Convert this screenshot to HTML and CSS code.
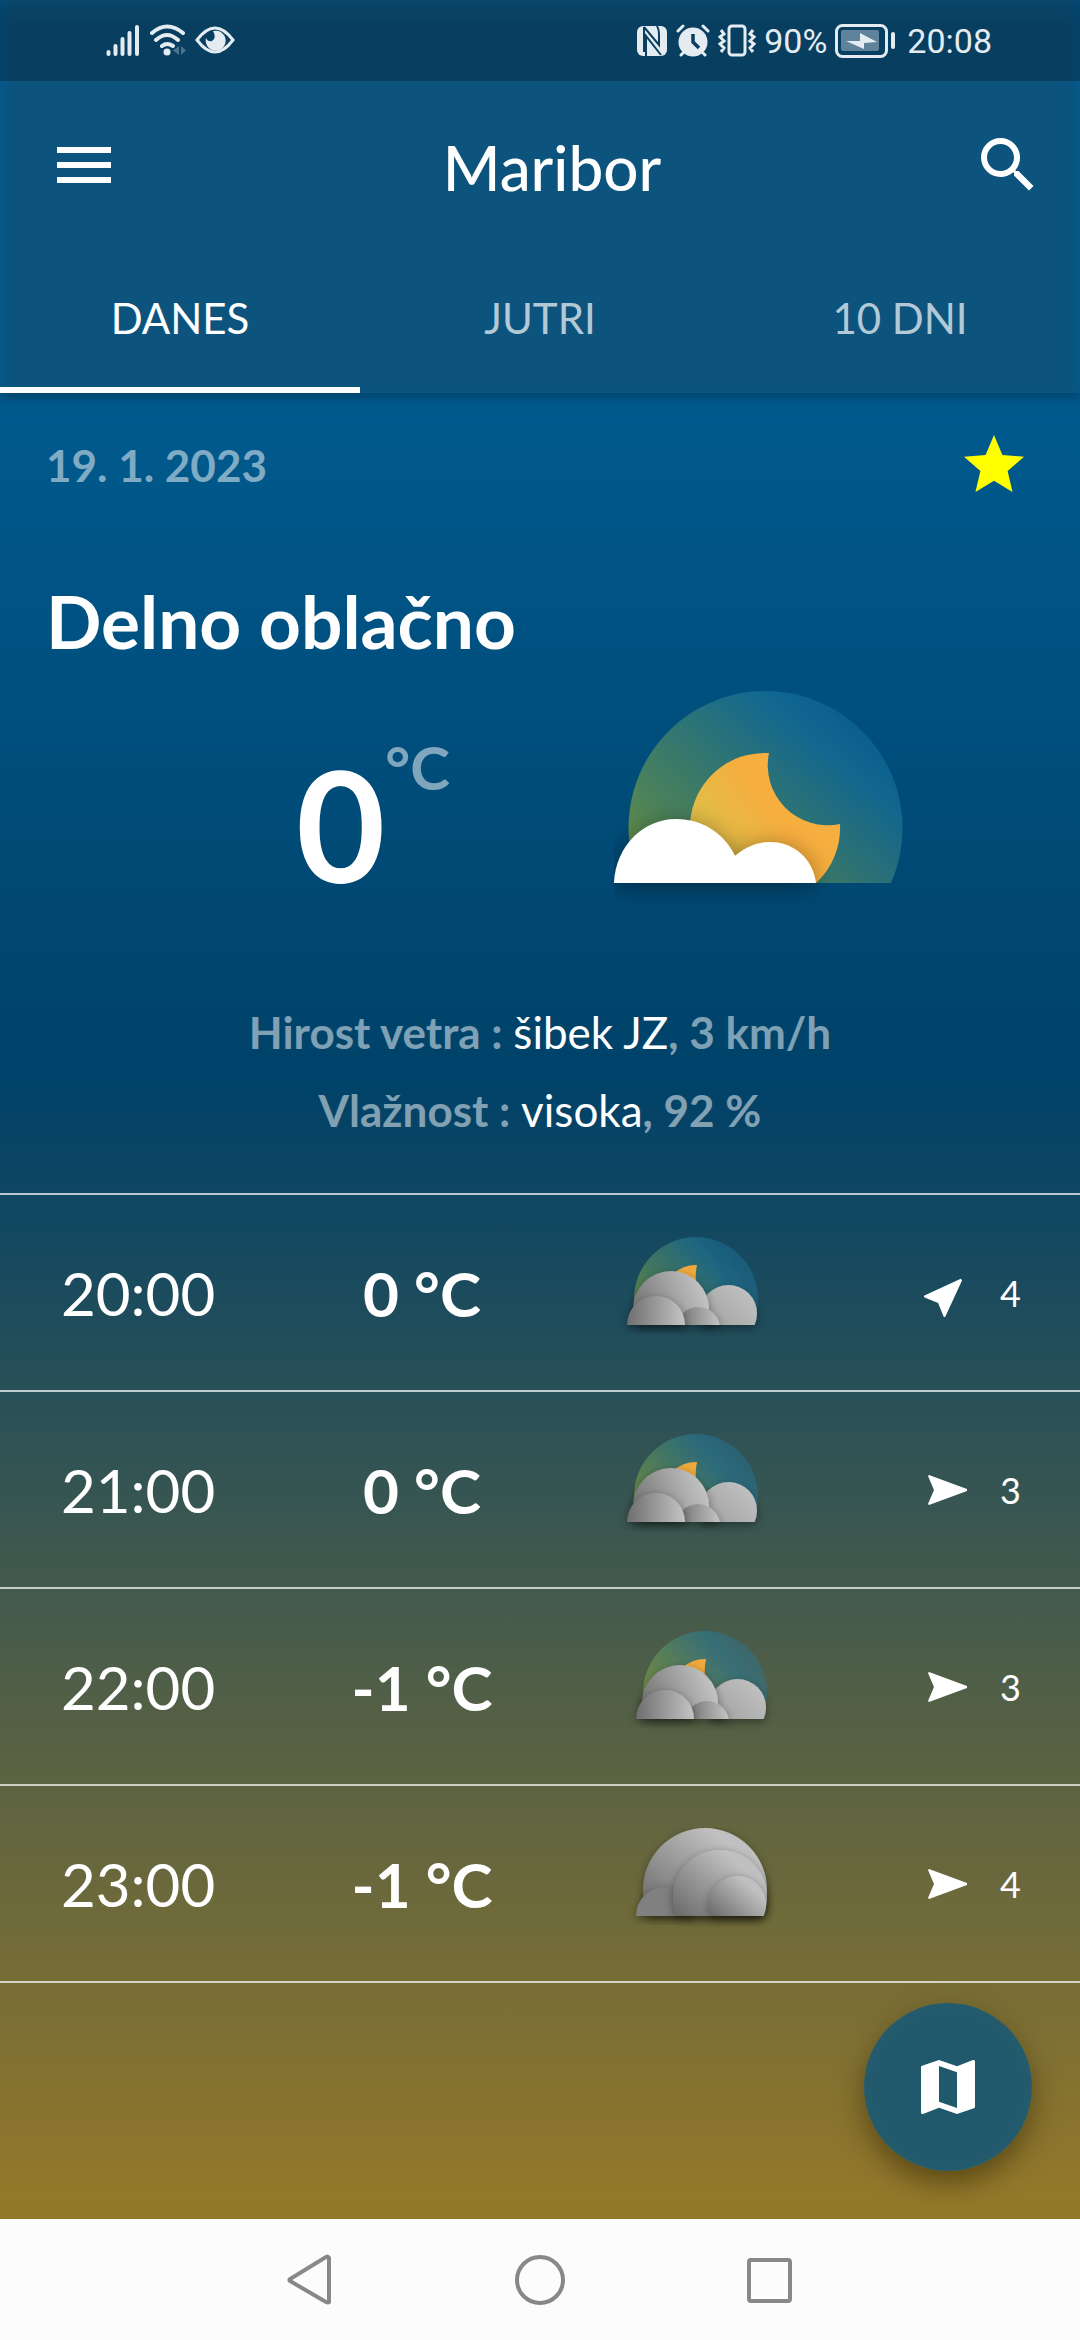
FILE: index.html
```html
<!DOCTYPE html>
<html lang="sl">
<head>
<meta charset="utf-8">
<meta name="viewport" content="width=device-width, initial-scale=1">
<title>Maribor</title>
<link rel="stylesheet" href="styles.css">
</head>
<body>
<svg class="defs" aria-hidden="true">
  <defs>
    <linearGradient id="sky" x1="0" y1=".8" x2=".8" y2=".15">
      <stop offset="0" stop-color="#9db52c" stop-opacity=".62"/>
      <stop offset=".4" stop-color="#74a658" stop-opacity=".5"/>
      <stop offset=".85" stop-color="#2480a4" stop-opacity=".5"/>
      <stop offset="1" stop-color="#1f7fae" stop-opacity=".35"/>
    </linearGradient>
    <linearGradient id="moon" gradientUnits="userSpaceOnUse" x1="85" y1="175" x2="160" y2="125">
      <stop offset="0" stop-color="#d9c44c"/>
      <stop offset="1" stop-color="#f6ae3e"/>
    </linearGradient>
    <linearGradient id="puff" x1="0" y1=".7" x2="1" y2=".3">
      <stop offset="0" stop-color="#707070"/>
      <stop offset="1" stop-color="#c6c6c6"/>
    </linearGradient>
    <linearGradient id="puff-flat" x1="0" y1="0" x2="1" y2="0">
      <stop offset="0" stop-color="#6e6e6e"/>
      <stop offset="1" stop-color="#c4c4c4"/>
    </linearGradient>
    <linearGradient id="puff-light" x1="0" y1="1" x2="1" y2="0">
      <stop offset="0" stop-color="#989898"/>
      <stop offset="1" stop-color="#c6c6c6"/>
    </linearGradient>
    <linearGradient id="puff-steep" x1=".1" y1=".9" x2=".8" y2=".1">
      <stop offset="0" stop-color="#606060"/>
      <stop offset=".9" stop-color="#c0c0c0"/>
    </linearGradient>
    <filter id="cast" x="-30%" y="-30%" width="160%" height="160%">
      <feDropShadow dx="0" dy="3" stdDeviation="5" flood-color="#000" flood-opacity=".4"/>
    </filter>
    <filter id="cast-wide" x="-30%" y="-40%" width="160%" height="190%">
      <feDropShadow dx="0" dy="4" stdDeviation="12" flood-color="#000" flood-opacity=".42"/>
    </filter>
    <clipPath id="ground"><rect x="-20" y="-20" width="180" height="108"/></clipPath>
    <symbol id="cloudy-night" viewBox="-10 0 152 112" overflow="visible">
      <g clip-path="url(#ground)">
        <circle cx="69" cy="62" r="62" fill="url(#sky)"/>
        <path d="M35 62A34 34 0 0 1 70 28Q67 42 71 55V75H35Z" fill="#f0a93c"/>
      </g>
      <g filter="url(#cast)"><g clip-path="url(#ground)">
        <circle cx="101.500" cy="76.500" r="28.500" fill="url(#puff-light)"/>
      </g></g>
      <g filter="url(#cast)"><g clip-path="url(#ground)">
        <circle cx="44" cy="72" r="38" fill="url(#puff)"/>
        <circle cx="71" cy="92" r="22" fill="url(#puff-flat)"/>
      </g></g>
      <path d="M0 88A29 29 0 0 1 58 88Z" fill="url(#puff-flat)" filter="url(#cast)"/>
    </symbol>
    <symbol id="overcast" viewBox="-10 0 152 112" overflow="visible">
      <g filter="url(#cast)"><g clip-path="url(#ground)"><circle cx="69" cy="62" r="62" fill="url(#puff-steep)"/></g></g>
      <path d="M0 88A29 29 0 0 1 58 88Z" fill="#808080" filter="url(#cast)"/>
      <g filter="url(#cast)"><g clip-path="url(#ground)"><circle cx="84" cy="69" r="47" fill="url(#puff-steep)"/></g></g>
      <g filter="url(#cast)"><g clip-path="url(#ground)"><circle cx="101.500" cy="76.500" r="28.500" fill="url(#puff-steep)"/></g></g>
    </symbol>
    <symbol id="arrow" viewBox="0 0 40 32"><path d="M1 1L39 15V17L1 31L0 30L6 16L0 2Z"/></symbol>
  </defs>
</svg>
<div class="screen">
  <header class="top">
    <div class="status">
      <div class="status-group">
        <svg width="34" height="34" viewBox="0 0 34 34"><path d="M2.500 28v2M9.500 22v8M16.500 15v15M23.500 9v21M31 3v27" stroke="currentColor" stroke-width="4" stroke-linecap="round"/></svg>
        <svg width="37" height="34" viewBox="0 0 37 34"><g fill="none" stroke="currentColor" stroke-width="4" stroke-linecap="round"><path d="M3 9Q18 -4 34 9M7 16Q18 6 29 16M13 22Q18 18 24 22"/></g><circle cx="18" cy="28" r="3.500" fill="currentColor"/><path d="M30 22v9l-6-4.500zM32 22v9l5-4.500z" fill="currentColor" opacity=".3"/></svg>
        <svg width="40" height="34" viewBox="0 0 40 34"><path d="M2 16Q11 4 20 4T38 16Q29 28 20 28T2 16Z" fill="none" stroke="currentColor" stroke-width="3"/><path d="M18 7A10 10 0 1 1 11 14Q13 18 17 17Q22 14 18 7Z" fill="currentColor"/></svg>
      </div>
      <div class="status-group status-right">
        <svg width="32" height="34" viewBox="0 0 32 34"><rect x="1" y="2" width="30" height="30" rx="6" fill="currentColor"/><path d="M8 3L23 21V10Q23 5 21 2M8 3V28M10 32V12L25 31" fill="none" stroke="#083f60" stroke-width="2"/></svg>
        <svg width="34" height="34" viewBox="0 0 34 34"><circle cx="17" cy="18" r="14.500" fill="currentColor"/><path d="M2 7L7 2M32 7L27 2M5 31L8 28M29 31L26 28" stroke="currentColor" stroke-width="3" stroke-linecap="round"/><path d="M17 10V18L23 24" fill="none" stroke="#083f60" stroke-width="3.500"/></svg>
        <svg width="38" height="34" viewBox="0 0 38 34"><g fill="none" stroke="currentColor" stroke-width="3"><rect x="11" y="2" width="16" height="29" rx="3"/><path d="M3 6l3 4-4 3 4 4-4 3 4 4-3 4M35 6l-3 4 4 3-4 4 4 3-4 4 3 4"/></g></svg>
        <span>90%</span>
        <svg width="60" height="34" viewBox="0 0 60 34"><rect x="1.500" y="1.500" width="50" height="31" rx="6" fill="none" stroke="currentColor" stroke-width="3"/><rect x="6" y="6" width="38" height="21" rx="2" fill="currentColor" opacity=".4"/><path d="M11 17L25 17V9L42 18L29 19V25Z" fill="currentColor"/><path d="M58 10V23" stroke="currentColor" stroke-width="4" stroke-linecap="round"/></svg>
        <span class="clock">20:08</span>
      </div>
    </div>
    <div class="bar">
      <button class="icon-btn" aria-label="Meni"><svg width="72" height="72" viewBox="0 0 24 24"><path d="M3 18h18v-2H3v2zm0-5h18v-2H3v2zm0-7v2h18V6H3z" fill="currentColor"/></svg></button>
      <h1 class="title">Maribor</h1>
      <button class="icon-btn" aria-label="Iskanje"><svg width="72" height="72" viewBox="0 0 24 24"><path d="M15.500 14h-.79l-.28-.27A6.471 6.471 0 0 0 16 9.500 6.500 6.500 0 1 0 9.500 16c1.610 0 3.090-.59 4.230-1.570l.27.28v.79l5 4.990L20.490 19l-4.990-5zm-6 0C7.010 14 5 11.990 5 9.500S7.010 5 9.500 5 14 7.010 14 9.500 11.990 14 9.500 14z" fill="currentColor"/></svg></button>
    </div>
    <nav class="tabs">
      <button class="tab tab-active">DANES</button>
      <button class="tab">JUTRI</button>
      <button class="tab">10 DNI</button>
    </nav>
  </header>
  <main class="content">
    <section class="today">
      <div class="date-row">
        <span class="muted">19. 1. 2023</span>
        <button class="star" aria-label="Priljubljena"><svg width="72" height="72" viewBox="0 0 24 24"><path d="M12 17.270L18.180 21l-1.640-7.030L22 9.240l-7.190-.61L12 2 9.190 8.630 2 9.240l5.460 4.730L5.820 21z" fill="#ff0"/></svg></button>
      </div>
      <h2 class="summary">Delno oblačno</h2>
      <div class="now">
        <div class="now-temp"><span class="degrees">0</span><span class="unit">°C</span></div>
        <svg class="now-icon" width="290" height="240" viewBox="0 0 290 240">
          <path d="M26 193A137 137 0 1 1 277 193Z" fill="url(#sky)"/>
          <path d="M202 193A75 75 0 0 0 226 134A60 60 0 0 1 155 63A75 75 0 0 0 100 193Z" fill="url(#moon)"/>
          <path d="M0 193A62 64 0 0 1 121 166A48 48 0 0 1 202 193Z" fill="none"/>
          <path d="M0 193C2 155 30 129 62 129C88 129 110 143 121 166C132 157 143 152 156 152C180 152 199 169 202 193Z" fill="#fff" filter="url(#cast-wide)"/>
        </svg>
      </div>
      <div class="details">
        <p>Hirost vetra : <b>šibek JZ</b>, 3 km/h</p>
        <p>Vlažnost : <b>visoka</b>, 92 %</p>
      </div>
    </section>
    <ul class="hours">
      <li class="hour"><span class="time">20:00</span><span class="temp">0 °C</span><svg class="sky-icon" width="152" height="112"><use href="#cloudy-night"/></svg><span class="wind"><svg class="arrow arrow-ne" width="40" height="32"><use href="#arrow"/></svg>4</span></li>
      <li class="hour"><span class="time">21:00</span><span class="temp">0 °C</span><svg class="sky-icon" width="152" height="112"><use href="#cloudy-night"/></svg><span class="wind"><svg class="arrow" width="40" height="32"><use href="#arrow"/></svg>3</span></li>
      <li class="hour hour-wide"><span class="time">22:00</span><span class="temp">-1 °C</span><svg class="sky-icon" width="152" height="112"><use href="#cloudy-night"/></svg><span class="wind"><svg class="arrow" width="40" height="32"><use href="#arrow"/></svg>3</span></li>
      <li class="hour hour-wide"><span class="time">23:00</span><span class="temp">-1 °C</span><svg class="sky-icon" width="152" height="112"><use href="#overcast"/></svg><span class="wind"><svg class="arrow" width="40" height="32"><use href="#arrow"/></svg>4</span></li>
    </ul>
    <button class="fab" aria-label="Zemljevid"><svg width="72" height="72" viewBox="0 0 24 24"><path d="M20.500 3l-.16.030L15 5.100 9 3 3.360 4.900c-.21.070-.36.250-.36.480V20.500c0 .28.220.5.500.5l.16-.03L9 18.900l6 2.100 5.640-1.900c.21-.07.360-.25.360-.48V3.500c0-.28-.22-.5-.5-.5zM15 19l-6-2.110V5l6 2.110V19z" fill="currentColor"/></svg></button>
  </main>
  <nav class="system">
    <button aria-label="Nazaj"><svg width="52" height="52" viewBox="0 0 52 52"><path d="M44 4V48Q43 49 41 48L5 27Q4 26 5 25L41 3Q43 2 44 4Z"/></svg></button>
    <button aria-label="Domov"><svg width="52" height="52" viewBox="0 0 52 52"><circle cx="26" cy="26" r="23"/></svg></button>
    <button aria-label="Nedavno"><svg width="52" height="52" viewBox="0 0 52 52"><rect x="6" y="6" width="41" height="41" rx="2"/></svg></button>
  </nav>
</div>
</body>
</html>
```
FILE: styles.css
```css
* { box-sizing: border-box; }

body {
  margin: 0;
  font-family: Lato, "Noto Sans", sans-serif;
  color: #fff;
}

button {
  padding: 0;
  border: 0;
  background: none;
  color: inherit;
  font: inherit;
}

svg { display: block; }

.defs {
  position: absolute;
  width: 0;
  height: 0;
}

.screen {
  display: flex;
  flex-direction: column;
  min-height: 100vh;
  background: linear-gradient(#005b90 0, #005b90 16%, #004269 46%, #0b4564 50%, #94782a 94%);
}

.top {
  background: rgba(23, 78, 108, .5);
  box-shadow: 0 4px 12px rgba(0, 40, 60, .5), inset 10px 0 14px -8px #045c92, inset -10px 0 14px -8px #045c92;
}

.status {
  display: flex;
  justify-content: space-between;
  align-items: center;
  height: 81px;
  padding: 0 88px 0 106px;
  background: linear-gradient(rgba(0, 20, 35, .22), rgba(0, 20, 35, .33) 24px);
  color: #e4ecf2;
  font-family: Roboto, sans-serif;
  font-size: 34px;
}

.status-group {
  display: flex;
  align-items: center;
  gap: 9px;
}

.status-right { gap: 8px; }

.clock { margin-left: 4px; }

.bar {
  display: flex;
  align-items: center;
  justify-content: space-between;
  height: 168px;
  padding: 0 36px 0 48px;
}

.title {
  margin: 0;
  padding: 4px 0 0 12px;
  font-size: 62px;
  font-weight: 500;
}

.tabs {
  display: grid;
  grid-template-columns: repeat(3, 1fr);
}

.tab {
  height: 144px;
  border-bottom: 6px solid transparent;
  color: rgba(255, 255, 255, .7);
  font-size: 42px;
}

.tab-active {
  border-color: #fff;
  color: #fff;
}

.content {
  position: relative;
  flex: 1;
}

.today { padding: 36px 46px 0; }

.date-row {
  display: flex;
  align-items: center;
  justify-content: space-between;
  height: 72px;
}

.star { margin-right: 4px; }

.muted,
.details {
  color: rgba(255, 255, 255, .5);
  font-size: 44px;
  font-weight: 700;
}

.summary {
  margin: 78px 0 20px;
  font-size: 73px;
  line-height: 84px;
}

.now {
  display: grid;
  grid-template-columns: 1fr 1fr;
  height: 274px;
}

.now-temp {
  display: flex;
  padding-left: 250px;
  font-weight: 700;
}

.degrees {
  font-size: 154px;
  line-height: 282px;
}

.unit {
  color: rgba(255, 255, 255, .5);
  font-size: 60px;
  line-height: 168px;
}

.now-icon { margin: 7px 0 0 74px; }

.details {
  padding: 36px 0 44px;
  line-height: 78px;
  text-align: center;
}

.details p { margin: 0; }

.details b {
  color: #fff;
  font-weight: 400;
}

.hours {
  margin: 0;
  padding: 0;
  list-style: none;
  border-top: 2px solid rgba(255, 255, 255, .7);
}

.hour {
  display: grid;
  grid-template-columns: 280px 284px 1fr 152px;
  align-items: center;
  height: 197px;
  border-bottom: 2px solid rgba(255, 255, 255, .7);
}

.time {
  padding-left: 61px;
  font-size: 60px;
}

.temp {
  font-size: 62px;
  font-weight: 700;
  text-align: center;
}

.sky-icon { margin-left: 53px; }
.hour-wide .sky-icon { margin-left: 62px; }

.wind {
  display: flex;
  align-items: center;
  justify-content: space-between;
  padding-right: 59px;
  font-size: 36px;
}

.arrow { fill: #fff; }
.arrow-ne { transform: rotate(-45deg); }

.fab {
  position: absolute;
  right: 48px;
  bottom: 48px;
  display: grid;
  place-items: center;
  width: 168px;
  height: 168px;
  border-radius: 50%;
  background: radial-gradient(#20586c 50%, #295f6e);
  box-shadow: 0 12px 28px rgba(40, 30, 0, .5);
}

.system {
  display: flex;
  align-items: center;
  justify-content: center;
  gap: 177px;
  height: 121px;
  background: #fcfcfc;
}

.system svg {
  fill: none;
  stroke: #888;
  stroke-width: 4;
}
```
